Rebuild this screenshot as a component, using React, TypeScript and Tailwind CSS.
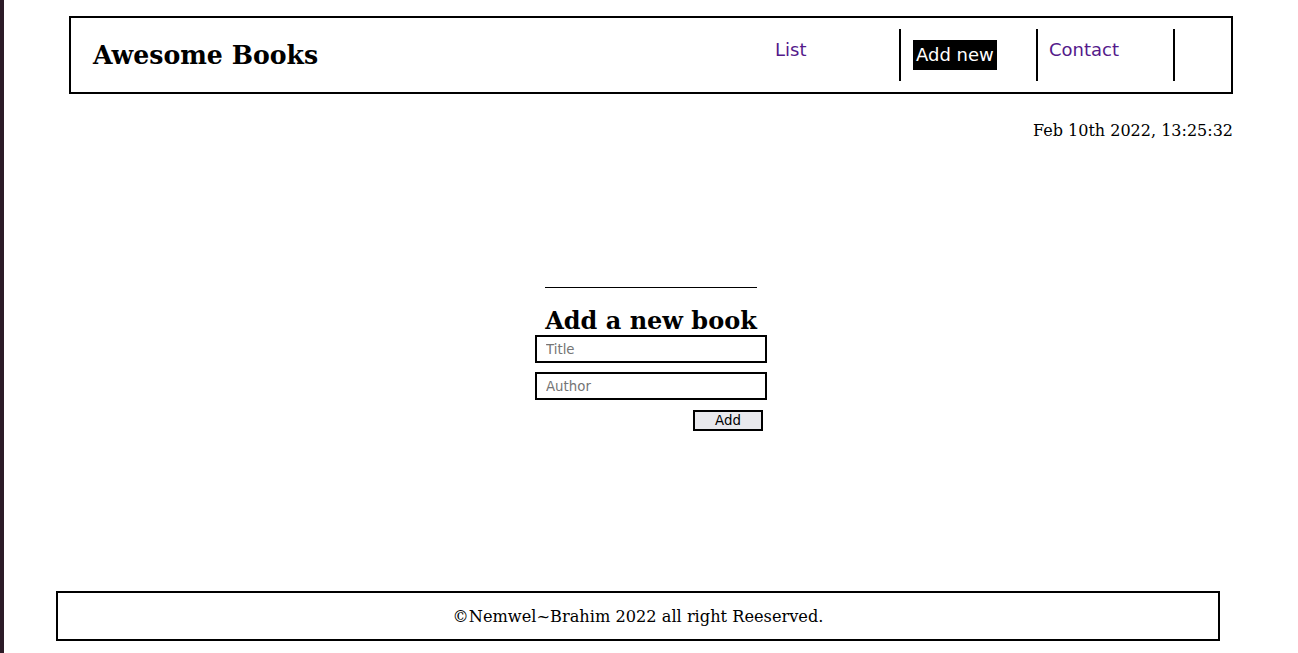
export default function App() {
  return (
    <div className="flex min-h-[653px] bg-white font-['DejaVu_Serif',serif] text-black">
      <div className="w-[4px] shrink-0 bg-[#2c1b27]" />
      <div className="flex flex-1 flex-col">
        <header className="ml-[65px] mt-[16px] flex h-[78px] w-[1164px] items-start border-2 border-black">
          <h1 className="ml-[22px] self-center text-[25.2px] font-bold leading-[29px]">
            Awesome Books
          </h1>
          <ul className="ml-auto mr-[56px] mt-[11px] flex font-['DejaVu_Sans',sans-serif] text-[18px] leading-[21px]">
            <li className="h-[52px] w-[137px] border-r-2 border-black pl-[11px] pt-[10px]">
              <a href="#list" className="text-[#551a8b]">
                List
              </a>
            </li>
            <li className="h-[52px] w-[137px] border-r-2 border-black pl-[12px]">
              <a
                href="#add"
                className="mt-[11px] inline-block bg-black px-[3px] pb-[5px] pt-[4px] text-white"
              >
                Add new
              </a>
            </li>
            <li className="h-[52px] w-[137px] border-r-2 border-black pl-[11px] pt-[10px]">
              <a href="#contact" className="text-[#551a8b]">
                Contact
              </a>
            </li>
          </ul>
        </header>

        <p className="mr-[65px] mt-[27px] text-right text-[16px] leading-[19px]">
          Feb 10th 2022, 13:25:32
        </p>

        <section className="mx-auto mt-[147px] flex flex-col items-center">
          <div className="border-t border-black pt-[18px]">
            <h2 className="text-[24px] font-bold leading-[29px]">Add a new book</h2>
          </div>
          <form className="flex flex-col font-['DejaVu_Sans',sans-serif] text-[13.333px]">
            <input
              type="text"
              placeholder="Title"
              className="h-[28px] w-[232px] border-2 border-black pl-[9px] placeholder:text-[#757575]"
            />
            <input
              type="text"
              placeholder="Author"
              className="mt-[9px] h-[28px] w-[232px] border-2 border-black pl-[9px] placeholder:text-[#757575]"
            />
            <button
              type="button"
              className="mr-[4px] mt-[10px] h-[21px] w-[70px] self-end border-2 border-black bg-[#e9e9ed] leading-[15px]"
            >
              Add
            </button>
          </form>
        </section>

        <footer className="ml-[52px] mt-[160px] flex h-[50px] w-[1164px] items-center justify-center border-2 border-black text-[16.2px] leading-[19px]">
          <p>©Nemwel~Brahim 2022 all right Reeserved.</p>
        </footer>
      </div>
    </div>
  );
}
